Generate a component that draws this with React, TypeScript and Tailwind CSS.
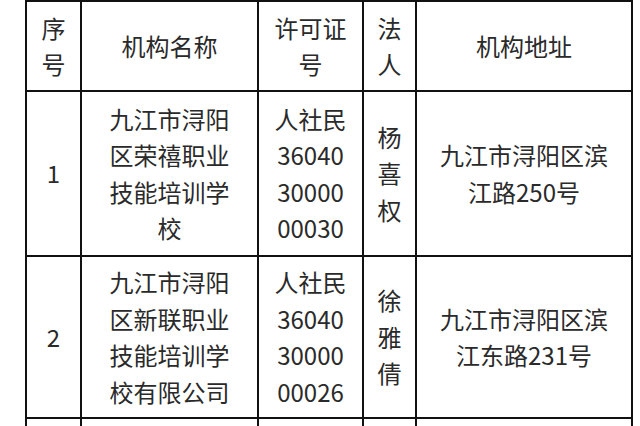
import React from "react";

const rows = [
  {
    no: "1",
    name: "九江市浔阳区荣禧职业技能培训学校",
    license: "人社民360403000000030",
    person: "杨喜权",
    address: "九江市浔阳区滨江路250号",
  },
  {
    no: "2",
    name: "九江市浔阳区新联职业技能培训学校有限公司",
    license: "人社民360403000000026",
    person: "徐雅倩",
    address: "九江市浔阳区滨江东路231号",
  },
];

const cell =
  "bg-white flex items-center justify-center text-center break-all";

const App = () => {
  return (
    <div
      className="w-[640px] h-[426px] overflow-hidden bg-white text-[#2a2a2a] text-[24px] leading-[36.5px]"
      style={{ fontFamily: '"Noto Sans CJK SC", "Noto Sans", sans-serif' }}
    >
      <div className="ml-[25px] w-[608px] grid grid-cols-[53px_175px_103px_51px_214px] grid-rows-[88px_163px_160px_40px] gap-[2px] bg-[#111] border-2 border-[#111]">
        {/* header */}
        <div className={cn(cell, "px-[8px]")}>序号</div>
        <div className={cn(cell, "px-[20px]")}>机构名称</div>
        <div className={cn(cell, "px-[14px]")}>许可证号</div>
        <div className={cn(cell, "px-[8px]")}>法人</div>
        <div className={cn(cell, "px-[16px]")}>机构地址</div>

        {rows.map((r) => (
          <React.Fragment key={r.no}>
            <div className={cn(cell, "px-[8px]")}>{r.no}</div>
            <div className={cn(cell, "px-[20px]")}>{r.name}</div>
            <div className={cn(cell, "px-[14px]")}>{r.license}</div>
            <div className={cn(cell, "px-[8px]")}>{r.person}</div>
            <div className={cn(cell, "px-[16px]")}>{r.address}</div>
          </React.Fragment>
        ))}

        {/* next row, cut off at the bottom */}
        <div className={cell} />
        <div className={cell} />
        <div className={cell} />
        <div className={cell} />
        <div className={cell} />
      </div>
    </div>
  );
};

function cn(...c: string[]) {
  return c.join(" ");
}

export default App;
